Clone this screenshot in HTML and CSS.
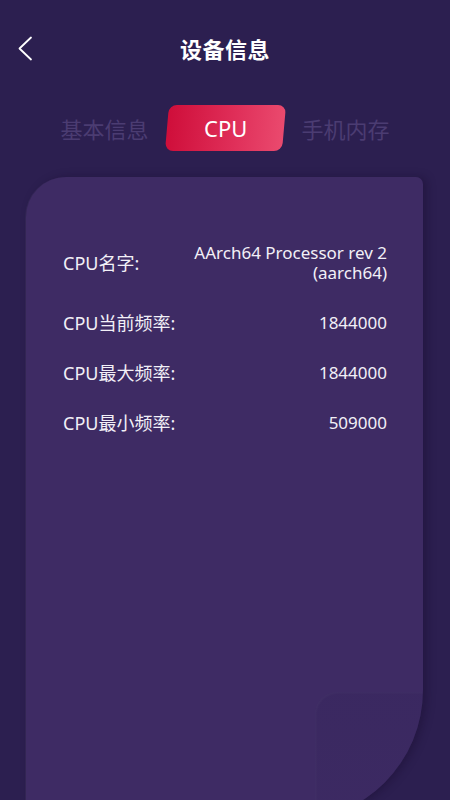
FILE: index.html
```html
<!DOCTYPE html>
<html lang="zh-CN">
<head>
    <meta charset="UTF-8">
    <meta name="viewport" content="width=device-width, initial-scale=1.0">
    <title>设备信息</title>
    <link rel="stylesheet" href="styles.css">
</head>
<body>
    <div class="page">
        <div class="header">
            <div class="back">
                <svg width="16" height="26" viewBox="0 0 16 26">
                    <path d="M14 1.5 L2.5 12.5 L14 23.5" fill="none" stroke="#ffffff" stroke-width="1.8" stroke-linecap="round" stroke-linejoin="round"/>
                </svg>
            </div>
            <h1 class="title">设备信息</h1>
            <div></div>
        </div>

        <div class="tabs">
            <span class="tab">基本信息</span>
            <span class="tab active"><span class="tab-text">CPU</span></span>
            <span class="tab">手机内存</span>
        </div>

        <div class="card">
            <div class="info-row">
                <span class="info-label">CPU名字:</span>
                <span class="info-value">AArch64 Processor rev 2<br>(aarch64)</span>
            </div>
            <div class="info-row">
                <span class="info-label">CPU当前频率:</span>
                <span class="info-value">1844000</span>
            </div>
            <div class="info-row">
                <span class="info-label">CPU最大频率:</span>
                <span class="info-value">1844000</span>
            </div>
            <div class="info-row">
                <span class="info-label">CPU最小频率:</span>
                <span class="info-value">509000</span>
            </div>
            <div class="card-fold"></div>
        </div>
    </div>
</body>
</html>
```

FILE: styles.css
```css
html, body {
    margin: 0;
    padding: 0;
    height: 100%;
    overflow: hidden;
}

body {
    font-family: "Noto Sans", "Noto Sans CJK SC", sans-serif;
    background: #2c1f50;
    color: #f2f0f7;
}

.page {
    width: 450px;
}

.header {
    height: 96px;
    display: grid;
    grid-template-columns: 1fr auto 1fr;
    align-items: center;
}

.back {
    padding-left: 17px;
    padding-top: 2px;
    display: flex;
    align-items: center;
}

.title {
    margin: 0;
    font-size: 22px;
    font-weight: 700;
    color: #ffffff;
    letter-spacing: 0.5px;
}

.tabs {
    display: flex;
    justify-content: center;
    align-items: center;
    gap: 18px;
    margin-top: 9px;
    height: 46px;
}

.tab {
    font-size: 22px;
    color: #4b3c72;
    font-family: "Noto Sans CJK SC", sans-serif;
}

.tab.active {
    width: 117px;
    height: 46px;
    border-radius: 8px;
    background: linear-gradient(90deg, #cf0e3a 0%, #e0305a 60%, #ea4a6e 100%);
    transform: skewX(-5deg);
    display: flex;
    align-items: center;
    justify-content: center;
    color: #ffffff;
}

.tab-text {
    transform: skewX(5deg);
    font-family: "Noto Sans", sans-serif;
    font-size: 22px;
}

.card {
    position: relative;
    margin: 26px 27px 0 26px;
    height: 644px;
    box-sizing: border-box;
    padding: 66px 36px 0 37px;
    background: #3e2b64;
    border-radius: 40px 7px 131px 0;
    box-shadow: -1px 0 0 rgba(255, 255, 255, 0.04), 4px 0 8px rgba(20, 10, 40, 0.35);
    display: flex;
    flex-direction: column;
    gap: 30px;
    overflow: hidden;
}

.info-row {
    display: flex;
    justify-content: space-between;
    align-items: center;
    line-height: 20px;
}

.info-label {
    font-size: 18px;
}

.info-value {
    font-size: 17px;
    text-align: right;
}

.card-fold {
    position: absolute;
    left: 289px;
    top: 515px;
    width: 140px;
    height: 160px;
    border-top-left-radius: 22px;
    background: linear-gradient(180deg, rgba(40, 28, 80, 0.16) 0%, rgba(40, 28, 80, 0.06) 100%);
    box-shadow: inset 1px 1px 3px rgba(255, 255, 255, 0.035);
}
```
